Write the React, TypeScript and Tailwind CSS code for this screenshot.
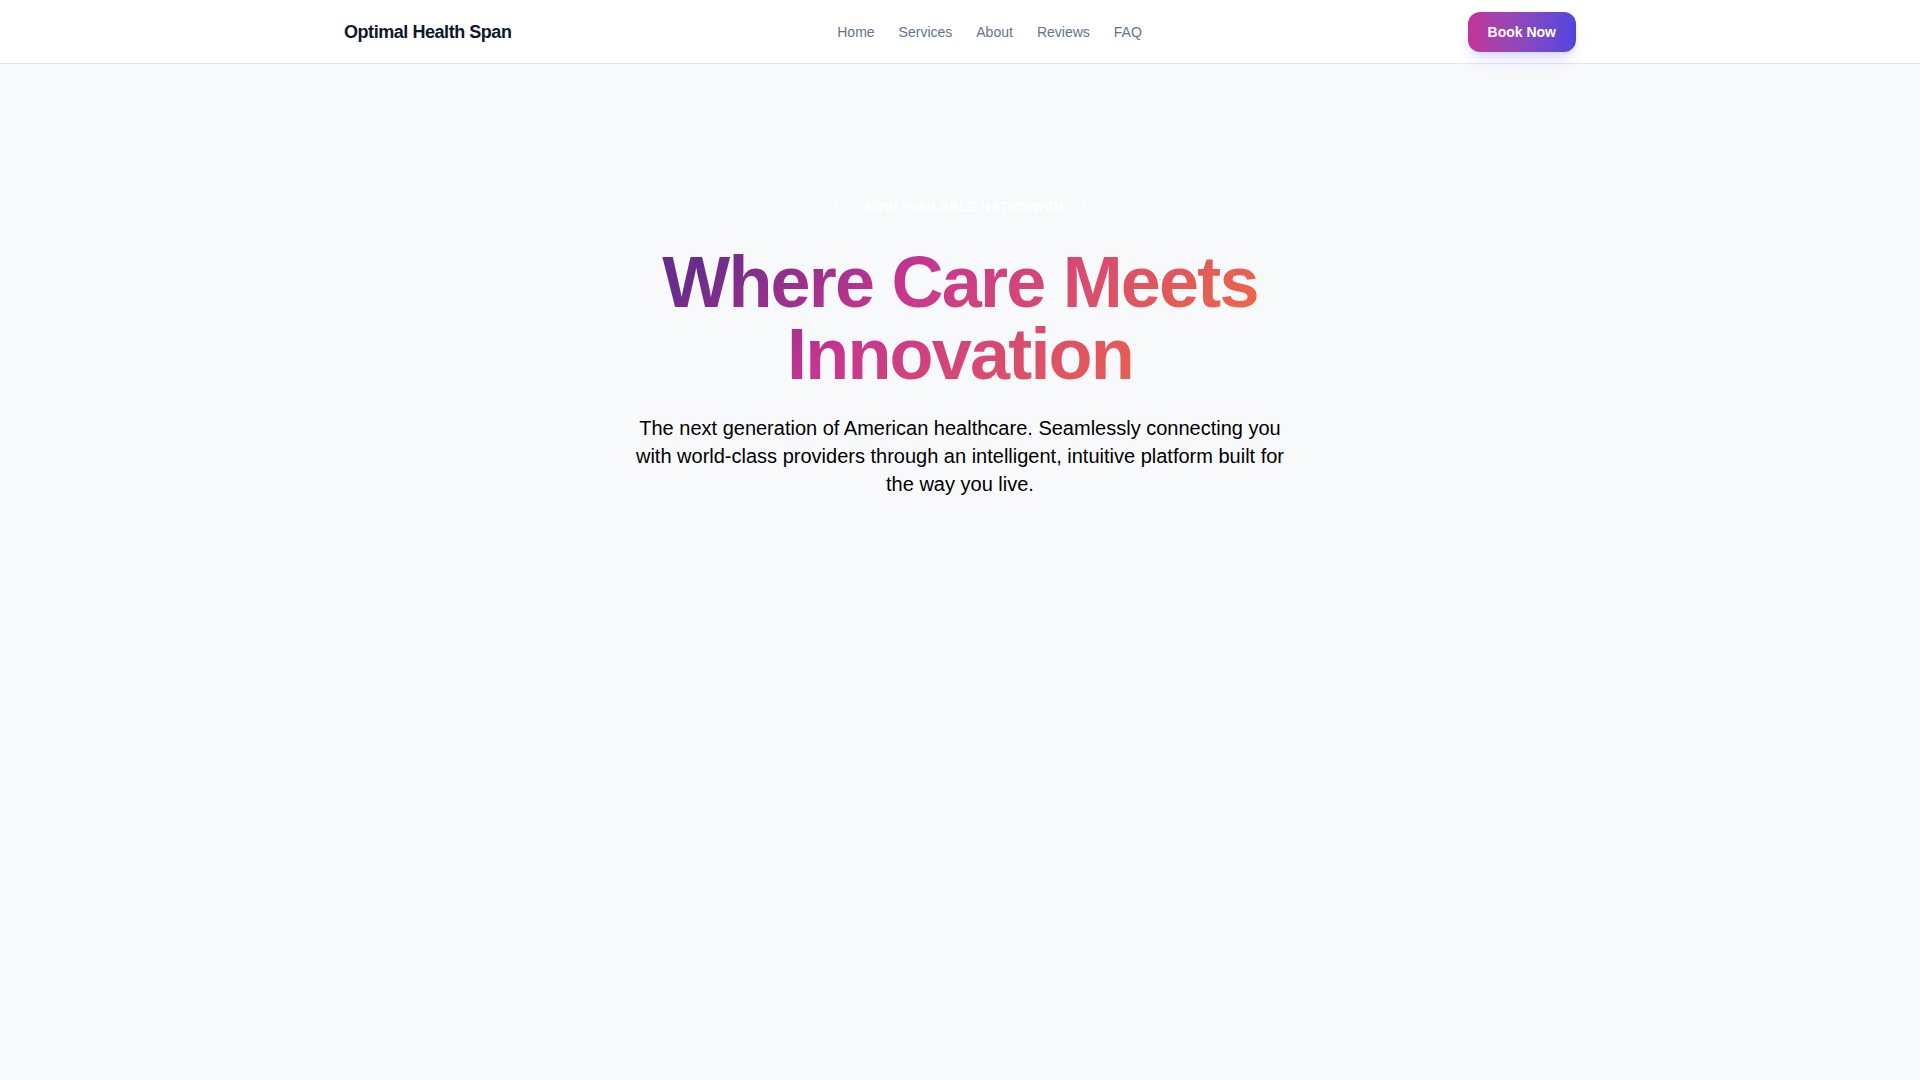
import React from "react";

const navLinks = ["Home", "Services", "About", "Reviews", "FAQ"];

function Navbar() {
  return (
    <header className="bg-white border-b border-[#e3e5ea]">
      <div className="max-w-7xl mx-auto px-6 h-[63px] flex items-center justify-between">
        <a href="#" className="text-lg font-bold tracking-tight text-slate-900">
          Optimal Health Span
        </a>

        <nav className="flex items-center gap-6">
          {navLinks.map((link) => (
            <a key={link} href="#" className="text-sm text-slate-500 hover:text-slate-900 transition-colors">
              {link}
            </a>
          ))}
        </nav>

        <button className="px-5 py-2.5 rounded-xl bg-gradient-to-r from-[#c2349a] to-[#5144e0] text-sm font-bold text-white shadow-lg shadow-indigo-500/20">
          Book Now
        </button>
      </div>
    </header>
  );
}

function Hero() {
  return (
    <section className="pt-32 px-6">
      <div className="max-w-4xl mx-auto flex flex-col items-center text-center">
        {/* бейдж майже зливається з фоном */}
        <span className="mb-6 inline-flex rounded-full border border-white/70 pl-7 pr-4 py-1 text-[13px] leading-5 font-bold uppercase tracking-[0.03em] text-white">
          Now Available Nationwide
        </span>

        <h1 className="w-full mb-6 text-7xl leading-none font-bold tracking-tight bg-[linear-gradient(135deg,#6a2c8a_20%,#c8368f_42%,#ea654a_76%)] bg-clip-text text-transparent">
          Where Care Meets Innovation
        </h1>

        <p className="max-w-2xl text-xl text-black">
          The next generation of American healthcare. Seamlessly connecting you with world-class
          providers through an intelligent, intuitive platform built for the way you live.
        </p>
      </div>
    </section>
  );
}

export default function App() {
  return (
    <div className="min-h-screen bg-[#f8f9fb] font-['Liberation_Sans',Arial,sans-serif]">
      <Navbar />
      <Hero />
    </div>
  );
}
